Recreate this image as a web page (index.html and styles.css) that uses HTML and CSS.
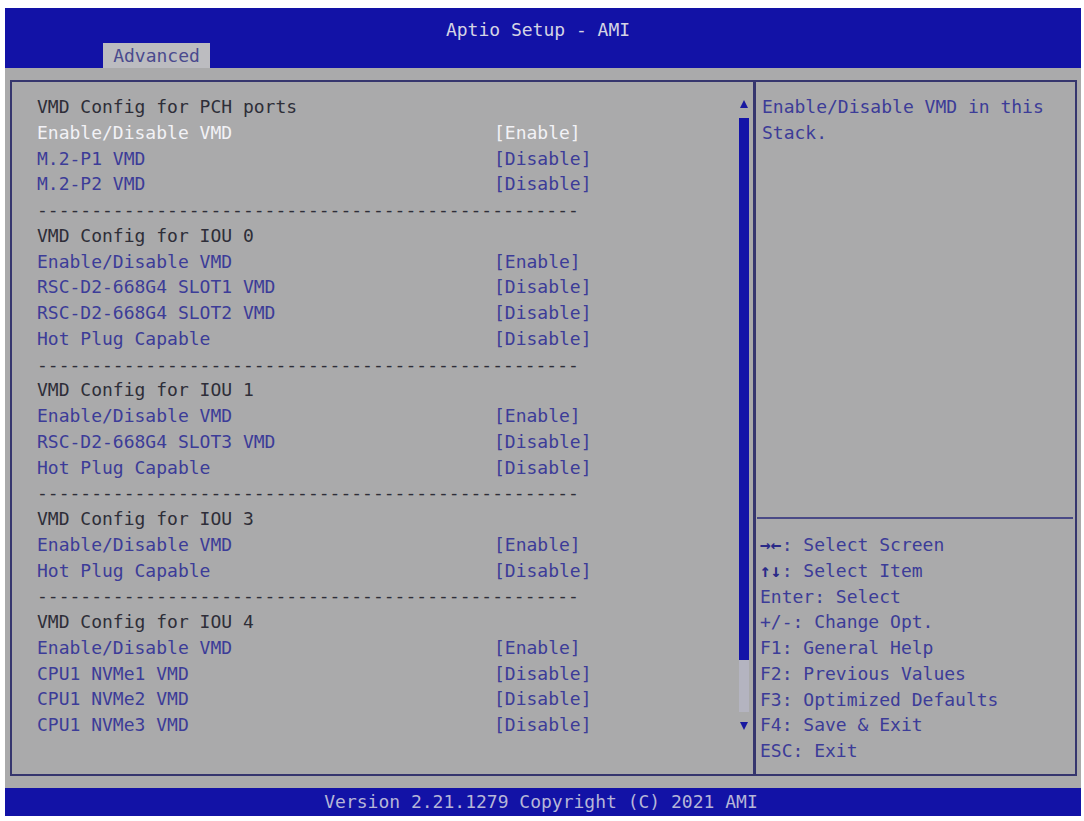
FILE: index.html
```html
<!DOCTYPE html>
<html lang="en">
<head>
  <meta charset="UTF-8">
  <title>Aptio Setup - AMI</title>
  <link rel="stylesheet" href="styles.css">
</head>
<body>
  <div class="screen">
    <header class="topbar">
      <div class="title">Aptio Setup - AMI</div>
      <div class="tabs">
        <div class="tab">Advanced</div>
      </div>
    </header>

    <main class="body">
      <div class="frame">
        <section class="left">
          <div class="list">
            <div class="row head">VMD Config for PCH ports</div>
            <div class="row item selected"><span>Enable/Disable VMD</span><span>[Enable]</span></div>
            <div class="row item"><span>M.2-P1 VMD</span><span>[Disable]</span></div>
            <div class="row item"><span>M.2-P2 VMD</span><span>[Disable]</span></div>
            <div class="row sep">--------------------------------------------------</div>

            <div class="row head">VMD Config for IOU 0</div>
            <div class="row item"><span>Enable/Disable VMD</span><span>[Enable]</span></div>
            <div class="row item"><span>RSC-D2-668G4 SLOT1 VMD</span><span>[Disable]</span></div>
            <div class="row item"><span>RSC-D2-668G4 SLOT2 VMD</span><span>[Disable]</span></div>
            <div class="row item"><span>Hot Plug Capable</span><span>[Disable]</span></div>
            <div class="row sep">--------------------------------------------------</div>

            <div class="row head">VMD Config for IOU 1</div>
            <div class="row item"><span>Enable/Disable VMD</span><span>[Enable]</span></div>
            <div class="row item"><span>RSC-D2-668G4 SLOT3 VMD</span><span>[Disable]</span></div>
            <div class="row item"><span>Hot Plug Capable</span><span>[Disable]</span></div>
            <div class="row sep">--------------------------------------------------</div>

            <div class="row head">VMD Config for IOU 3</div>
            <div class="row item"><span>Enable/Disable VMD</span><span>[Enable]</span></div>
            <div class="row item"><span>Hot Plug Capable</span><span>[Disable]</span></div>
            <div class="row sep">--------------------------------------------------</div>

            <div class="row head">VMD Config for IOU 4</div>
            <div class="row item"><span>Enable/Disable VMD</span><span>[Enable]</span></div>
            <div class="row item"><span>CPU1 NVMe1 VMD</span><span>[Disable]</span></div>
            <div class="row item"><span>CPU1 NVMe2 VMD</span><span>[Disable]</span></div>
            <div class="row item"><span>CPU1 NVMe3 VMD</span><span>[Disable]</span></div>
          </div>
          <div class="scroll">
            <div class="arrow up"></div>
            <div class="thumb"></div>
            <div class="track"></div>
            <div class="arrow down"></div>
          </div>
        </section>

        <aside class="right">
          <div class="help">Enable/Disable VMD in this Stack.</div>
          <div class="keys">
            <div><b>→←</b>: Select Screen</div>
            <div><b>↑↓</b>: Select Item</div>
            <div>Enter: Select</div>
            <div>+/-: Change Opt.</div>
            <div>F1: General Help</div>
            <div>F2: Previous Values</div>
            <div>F3: Optimized Defaults</div>
            <div>F4: Save &amp; Exit</div>
            <div>ESC: Exit</div>
          </div>
        </aside>
      </div>
    </main>

    <footer class="bottombar">Version 2.21.1279 Copyright (C) 2021 AMI</footer>
  </div>
</body>
</html>
```

FILE: styles.css
```css
body {
  margin: 0;
  background: #ffffff;
  font-family: "DejaVu Sans Mono", "Liberation Mono", monospace;
  font-size: 18px;
}

.screen {
  width: 1076px;
  margin: 8px 0 0 5px;
}

.topbar {
  height: 60px;
  background: #1212a6;
  display: flex;
  flex-direction: column;
  justify-content: space-between;
}

.title {
  padding: 12px 10px 0 0;
  line-height: 20px;
  text-align: center;
  color: #d4d4e4;
}

.tabs {
  display: flex;
  padding-left: 98px;
}

.tab {
  width: 107px;
  height: 25px;
  line-height: 26px;
  text-align: center;
  background: #bcbcc0;
  color: #4a4a8e;
}

.body {
  height: 720px;
  background: #aaaaab;
  padding: 12px 4px 12px 5px;
  box-sizing: border-box;
}

.frame {
  height: 696px;
  border: 2px solid #36366e;
  box-sizing: border-box;
  display: flex;
}

.left {
  width: 741px;
  display: flex;
  border-right: 3px solid #36366e;
}

.list {
  flex: 1;
  padding: 12px 0 0 25px;
}

.row {
  height: 25.75px;
  line-height: 25.75px;
  white-space: pre;
}

.head,
.sep {
  color: #2e2e38;
}

.item {
  display: grid;
  grid-template-columns: 457px auto;
  color: #3c3c98;
}

.item.selected {
  color: #f2f2f6;
}

.scroll {
  width: 10px;
  margin-right: 4px;
  padding-top: 18px;
  display: flex;
  flex-direction: column;
  align-items: center;
}

.arrow {
  width: 0;
  height: 0;
  border-left: 4px solid transparent;
  border-right: 4px solid transparent;
}

.arrow.up {
  border-bottom: 8px solid #1818a0;
}

.arrow.down {
  border-top: 8px solid #1818a0;
  margin-top: 10px;
}

.thumb {
  width: 10px;
  height: 542px;
  margin-top: 10px;
  background: #1414a8;
}

.track {
  width: 10px;
  height: 52px;
  background: #b4b4c0;
}

.right {
  flex: 1;
  display: flex;
  flex-direction: column;
  color: #3c3c98;
}

.help {
  height: 435px;
  padding: 12px 6px 0 6px;
  box-sizing: border-box;
  line-height: 25.75px;
}

.keys {
  border-top: 2px solid #4a4a86;
  margin: 0 2px 0 1px;
  padding: 13px 0 0 3px;
  line-height: 25.75px;
}

.keys b {
  font-weight: bold;
  color: #2a2a88;
}

.bottombar {
  height: 28px;
  line-height: 28px;
  background: #1212a6;
  color: #b6b6d8;
  text-align: center;
  padding-right: 4px;
  box-sizing: border-box;
}
```
